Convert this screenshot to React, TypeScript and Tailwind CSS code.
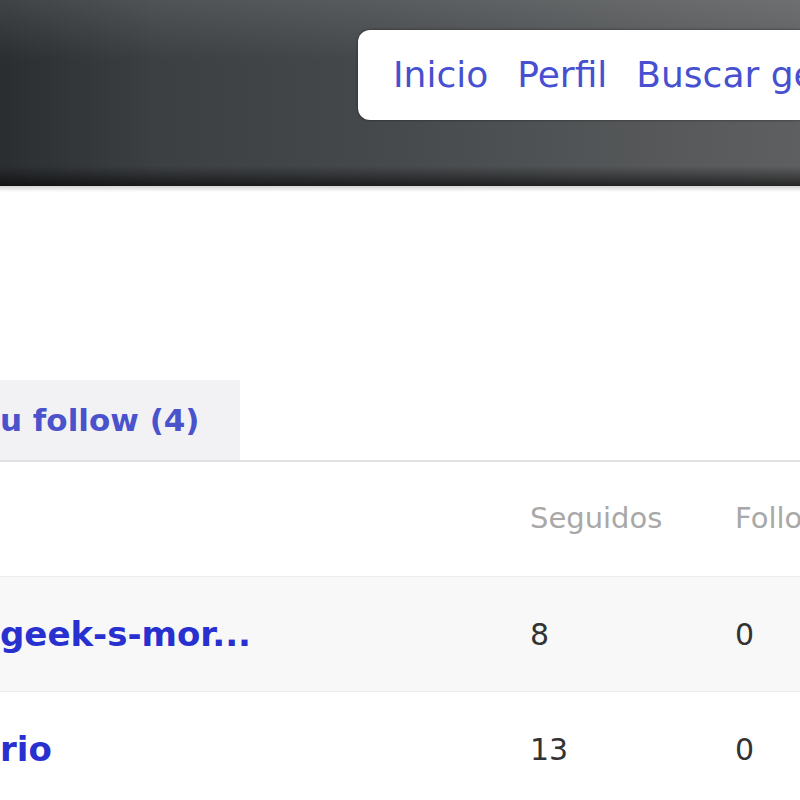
const rows = [
  { name: 'geek-s-mor...', following: '8', followers: '0', shaded: true },
  { name: 'rio', following: '13', followers: '0', shaded: false },
]

export default function App() {
  return (
    <div className="w-[800px] h-[800px] overflow-hidden bg-white font-['DejaVu_Sans',sans-serif]">
      {/* header bar */}
      <div className="relative h-[186px] bg-[linear-gradient(90deg,#2b2e31_0%,#3d4043_20%,#45484b_45%,#505355_70%,#5e5f60_100%)]">
        <div className="absolute inset-x-0 top-0 h-[60px] bg-[linear-gradient(180deg,rgba(255,255,255,0.1),rgba(255,255,255,0))]" />
        <div className="absolute inset-x-0 bottom-0 h-[20px] bg-[linear-gradient(180deg,rgba(0,0,0,0),rgba(0,0,0,0.6))]" />
        <div className="relative pt-[30px] pl-[358px]">
          <nav className="flex h-[90px] items-center gap-[29px] overflow-hidden whitespace-nowrap rounded-l-[12px] bg-white pl-[35px] text-[36px] text-[#4650d0] shadow-[0_0_3px_rgba(0,0,0,0.5)]">
            <span>Inicio</span>
            <span>Perfil</span>
            <span>Buscar gente</span>
          </nav>
        </div>
      </div>
      <div className="h-[6px] bg-[linear-gradient(180deg,#d4d4d4,#ffffff)]" />

      {/* tabs */}
      <div className="mt-[188px] flex border-b-2 border-[#e2e2e2]">
        <div className="flex h-[80px] w-[240px] items-center whitespace-nowrap bg-[#f2f2f4] text-[31px] font-semibold text-[#4a52cc]">
          u follow (4)
        </div>
      </div>

      {/* table */}
      <div className="flex h-[114px] items-center whitespace-nowrap text-[29px] text-[#a8a8a8]">
        <div className="w-[530px] shrink-0" />
        <div className="w-[205px] shrink-0">Seguidos</div>
        <div>Followers</div>
      </div>
      {rows.map((r) => (
        <div
          key={r.name}
          className={`flex h-[115px] items-center whitespace-nowrap border-t border-[#ececec] ${r.shaded ? 'bg-[#f8f8f8]' : 'bg-white'}`}
        >
          <div className="w-[530px] shrink-0 text-[34px] font-bold text-[#2830d0]">{r.name}</div>
          <div className="w-[205px] shrink-0 text-[30px] text-[#333]">{r.following}</div>
          <div className="text-[30px] text-[#333]">{r.followers}</div>
        </div>
      ))}
    </div>
  )
}
